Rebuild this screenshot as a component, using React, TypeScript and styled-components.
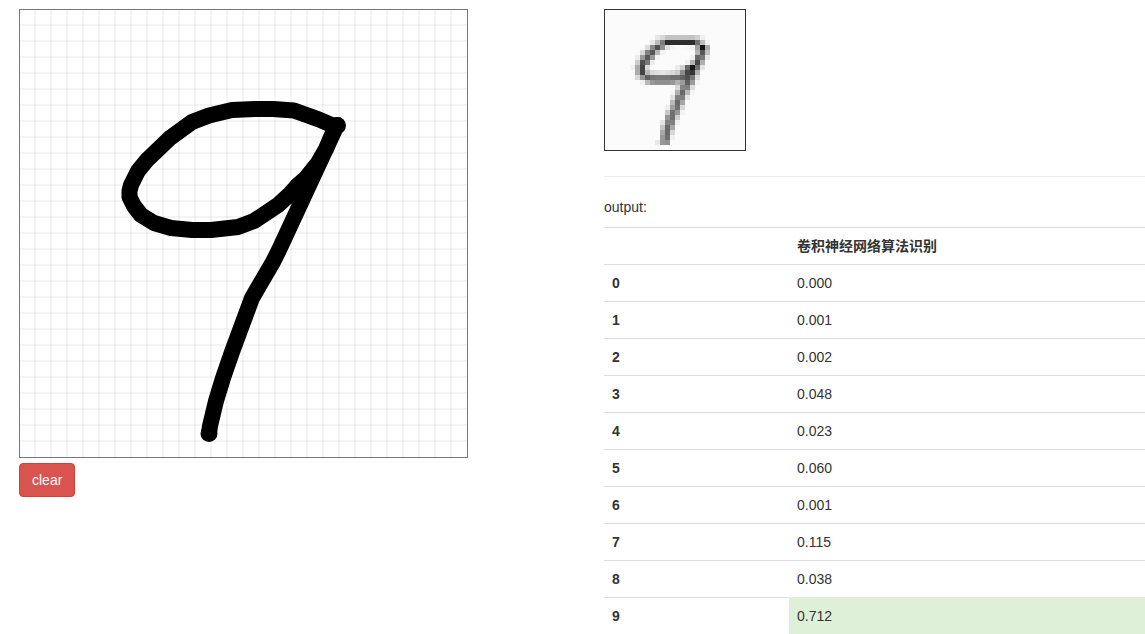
import React from "react";
import styled, { createGlobalStyle } from "styled-components";

const GlobalStyle = createGlobalStyle`
  *, *::before, *::after { box-sizing: border-box; }
  body {
    margin: 0;
    background: #fff;
    color: #333;
    font-family: "Liberation Sans", Arial, "Noto Sans CJK SC", sans-serif;
    font-size: 14px;
    line-height: 20px;
  }
`;

const Page = styled.main`
  display: grid;
  grid-template-columns: 1fr 1fr;
  column-gap: 44px;
  padding: 9px 0 0 19px;
`;

const DrawPanel = styled.section`
  display: flex;
  flex-direction: column;
  align-items: flex-start;
  gap: 5px;
`;

const ResultPanel = styled.section`
  display: flex;
  flex-direction: column;
`;

const Board = styled.svg`
  display: block;
  max-width: 100%;
`;

const Preview = styled.svg`
  display: block;
  align-self: flex-start;
  border: 1px solid #333;
  background: #fbfbfb;
`;

const ClearButton = styled.button`
  padding: 6px 12px;
  border: 1px solid #d43f3a;
  border-radius: 4px;
  background: #d9534f;
  color: #fff;
  font: inherit;
  cursor: pointer;
`;

const Divider = styled.hr`
  width: 100%;
  margin: 25px 0 20px;
  border: 0;
  border-top: 1px solid #eee;
`;

const Caption = styled.p`
  margin: 0 0 10px;
`;

const ScoreTable = styled.table`
  width: 100%;
  border-spacing: 0;
  table-layout: fixed;
`;

const HeadCell = styled.th<{ $narrow?: boolean }>`
  width: ${(p) => (p.$narrow ? "185px" : "auto")};
  height: 37px;
  padding: 8px;
  border-top: 1px solid #ddd;
  text-align: left;
  font-weight: bold;
`;

const ScoreCell = styled.td<{ $best: boolean }>`
  padding: 8px;
  border-top: 1px solid ${(p) => (p.$best ? "#dff0d8" : "#ddd")};
  background: ${(p) => (p.$best ? "#dff0d8" : "transparent")};
`;

const SCORES = [
  "0.000", "0.001", "0.002", "0.048", "0.023",
  "0.060", "0.001", "0.115", "0.038", "0.712",
];
const BEST = 9;

const GRID = Array.from({ length: 27 }, (_, i) => (i + 1) * 16);

// Each entry is a row of the 28x28 sample: row, first column, grey levels.
const SAMPLE: [number, number, string][] = [
  [5, 10, "e8 d8 c3 c3 c3 c3 c3 c3 d0 f0"],
  [6, 9, "e8 bc 7c 2d 2d 2d 2d 2d 2d 70 bc f0"],
  [7, 8, "dc 88 50 90 e0 f4 f8 fa f8 f0 a0 15 a8"],
  [8, 7, "d8 80 58 b8 f4 fb fb fb fb fb fb b4 58 c0"],
  [9, 6, "ec 98 58 98 f4 fb fb fb fb fb fb f0 68 78 e8"],
  [10, 6, "cc 50 78 ec fb fb fb fb fb fb f0 b4 48 b0"],
  [11, 5, "f0 ac 44 d8 fb fb fb fb fb ec d0 68 18 70 e4"],
  [12, 6, "ac 44 b8 d8 e0 e4 e0 d8 cc 8c 44 34 b0"],
  [13, 6, "d8 94 60 74 78 78 78 70 70 64 50 78 dc"],
  [14, 7, "f0 b8 98 90 90 90 98 b0 9c 60 9c f4"],
  [15, 14, "d8 84 80 dc"],
  [16, 13, "f4 b0 68 b8 f4"],
  [17, 13, "e0 80 80 e4"],
  [18, 13, "b8 68 a8"],
  [19, 12, "ee a0 70 d8"],
  [20, 12, "c8 70 98 f4"],
  [21, 12, "98 70 d0"],
  [22, 11, "e4 80 80 f0"],
  [23, 11, "c4 68 a8"],
  [24, 11, "a8 68 d8"],
  [25, 11, "98 70 f0"],
  [26, 10, "e8 98 90"],
];

function DrawingBoard() {
  return (
    <Board width="449" height="449" viewBox="0 0 449 449" role="img" aria-label="Handwritten digit">
      <g stroke="#000" strokeOpacity="0.045" strokeWidth="2">
        {GRID.map((p) => (
          <React.Fragment key={p}>
            <line x1={p} y1="0" x2={p} y2="449" />
            <line x1="0" y1={p} x2="449" y2={p} />
          </React.Fragment>
        ))}
      </g>
      <rect x="0.5" y="0.5" width="448" height="448" fill="none" stroke="#777" />
      <g transform="translate(-19 -9)">
        <path
          d="M334 126L319 119.500L294 110.500L273 109L255 109L232 110L209 115.500L192 122L170 138L147 160L138 171L131 185L129.500 191L129.500 197L134 206L141 215L154 223L171 228L192 230L211 230L238 227L254 221L278 205L289 195L297 186L306 178L318 163L326 149L332 135L337 125L279 250L273 262L252 298L232 352L223 378L216 401L210 426L209 433"
          fill="none"
          stroke="#000"
          strokeWidth="16"
          strokeLinejoin="round"
        />
        <circle cx="337.500" cy="125.500" r="8.500" />
        <circle cx="209" cy="433.500" r="8.500" />
      </g>
    </Board>
  );
}

function SamplePreview() {
  return (
    <Preview width="142" height="142" viewBox="0 0 28 28" shapeRendering="crispEdges" role="img" aria-label="Scaled sample">
      {SAMPLE.flatMap(([row, start, levels]) =>
        levels.split(" ").map((v, i) => (
          <rect key={`${row}-${i}`} x={start + i} y={row} width="1" height="1" fill={`#${v}${v}${v}`} />
        ))
      )}
    </Preview>
  );
}

export default function App() {
  return (
    <>
      <GlobalStyle />
      <Page>
        <DrawPanel>
          <DrawingBoard />
          <ClearButton type="button">clear</ClearButton>
        </DrawPanel>
        <ResultPanel>
          <SamplePreview />
          <Divider />
          <Caption>output:</Caption>
          <ScoreTable>
            <thead>
              <tr>
                <HeadCell $narrow aria-label="Digit" />
                <HeadCell scope="col">卷积神经网络算法识别</HeadCell>
              </tr>
            </thead>
            <tbody>
              {SCORES.map((score, digit) => (
                <tr key={digit}>
                  <HeadCell scope="row">{digit}</HeadCell>
                  <ScoreCell $best={digit === BEST}>{score}</ScoreCell>
                </tr>
              ))}
            </tbody>
          </ScoreTable>
        </ResultPanel>
      </Page>
    </>
  );
}
